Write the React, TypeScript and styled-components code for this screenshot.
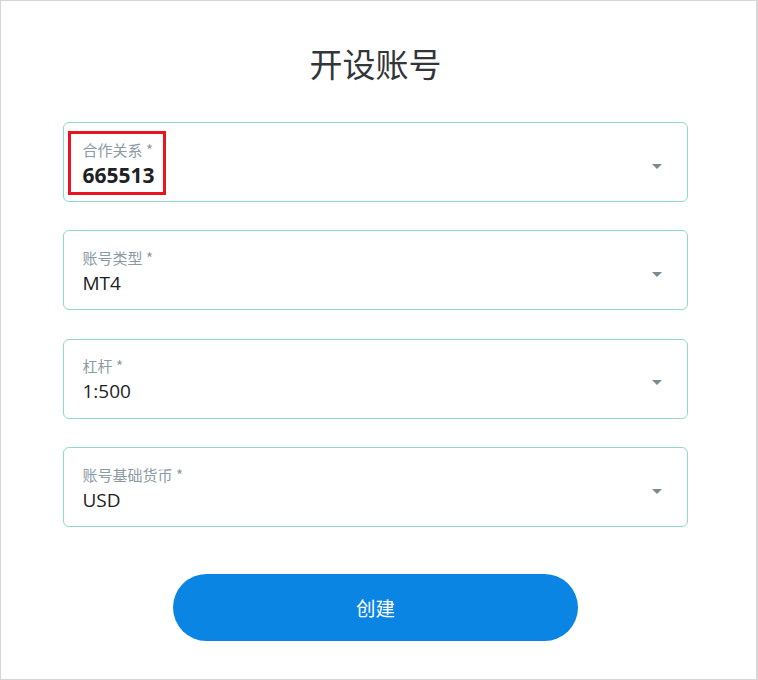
import styled, { createGlobalStyle } from "styled-components";

const fields = [
    { label: "合作关系", value: "665513", strong: true },
    { label: "账号类型", value: "MT4" },
    { label: "杠杆", value: "1:500" },
    { label: "账号基础货币", value: "USD" },
];

export default function App() {
    return (
        <>
            <GlobalStyle />
            <Frame>
                <Title>开设账号</Title>
                <Form>
                    {fields.map(({ label, value, strong }) =>
                        <Field key={label}>
                            <FieldText>
                                <Label>{label} *</Label>
                                <Value strong={strong}>{value}</Value>
                                {strong && <Highlight />}
                            </FieldText>
                            <Caret />
                        </Field>
                    )}
                </Form>
                <Submit>创建</Submit>
            </Frame>
        </>
    )
}

const GlobalStyle = createGlobalStyle`
    body {
        margin: 0;
        background: #ffffff;
        font-family: "Open Sans", "Noto Sans CJK SC", sans-serif;
    }
`

const Frame = styled.div`
    box-sizing: border-box;
    width: 758px;
    height: 680px;
    border: 1px solid #d6d6d6;
    border-right-width: 2px;
    display: flex;
    flex-direction: column;
    align-items: center;
`

const Title = styled.h1`
    margin: 41px 0 0 -6px;
    font-size: 33px;
    font-weight: 400;
    line-height: 42px;
    color: #333638;
    font-family: "Noto Sans CJK SC", sans-serif;
`

const Form = styled.div`
    margin-top: 38px;
    width: 625px;
    margin-left: -7px;
    display: flex;
    flex-direction: column;
    gap: 28.4px;
`

const Field = styled.div`
    box-sizing: border-box;
    height: 80px;
    border: 1px solid #8fd9c9;
    border-radius: 6px;
    display: flex;
    align-items: center;
    justify-content: space-between;
    padding: 0 25px 0 19px;
`

const FieldText = styled.div`
    position: relative;
    display: flex;
    flex-direction: column;
    gap: 5px;
`

const Label = styled.div`
    font-family: "Noto Sans CJK SC", sans-serif;
    font-size: 15px;
    line-height: 20px;
    color: #8b9aa3;
`

const Value = styled.div<{ strong?: boolean }>`
    font-size: ${props => props.strong ? "21px" : "19px"};
    font-weight: ${props => props.strong ? 700 : 400};
    line-height: 20px;
    color: #1e2124;
`

const Highlight = styled.div`
    position: absolute;
    left: -15px;
    top: -9px;
    width: 98px;
    height: 64px;
    box-sizing: border-box;
    border: 3px solid #e8141f;
`

const Caret = styled.div`
    width: 0;
    height: 0;
    border-left: 5.5px solid transparent;
    border-right: 5.5px solid transparent;
    border-top: 5.5px solid #7b8a93;
    margin-top: 8px;
`

const Submit = styled.button`
    margin-top: 47px;
    margin-left: -6px;
    width: 405px;
    height: 67px;
    border: 0;
    border-radius: 34px;
    background: #0b85e3;
    color: #ffffff;
    font-family: "Noto Sans CJK SC", sans-serif;
    font-size: 19.5px;
    cursor: pointer;
`
